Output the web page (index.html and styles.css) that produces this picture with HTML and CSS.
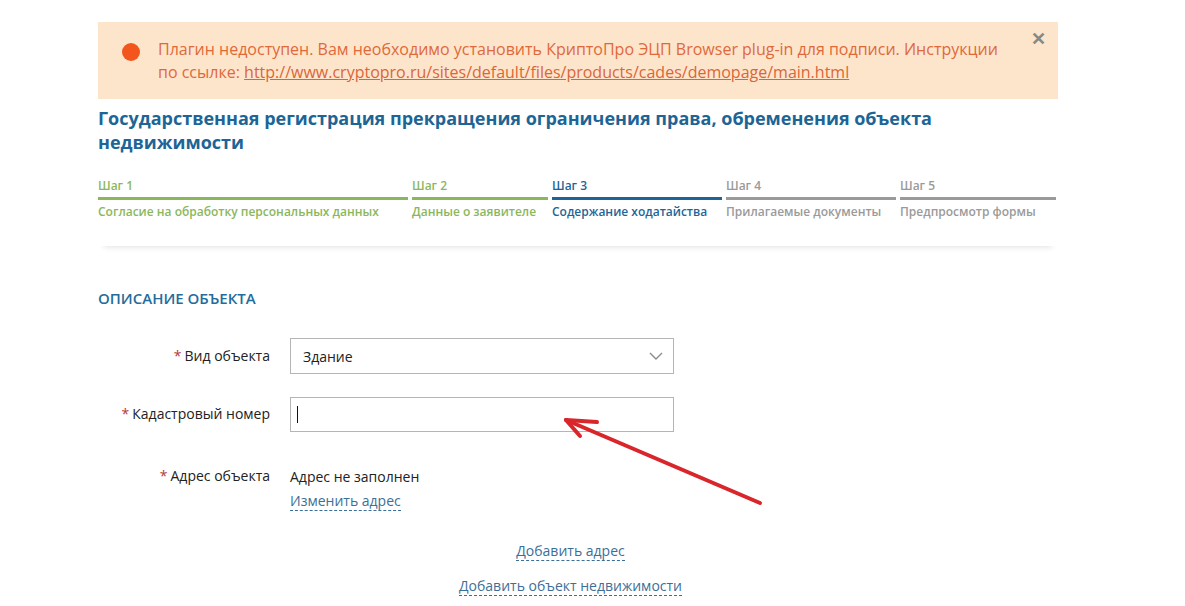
FILE: index.html
```html
<!DOCTYPE html>
<html lang="ru">
<head>
    <meta charset="UTF-8">
    <title>Государственная регистрация</title>
    <link rel="stylesheet" href="styles.css">
</head>
<body>
    <div class="pagina">
        <div class="aviso">
            <span class="aviso-punto"></span>
            <p class="aviso-texto">Плагин недоступен. Вам необходимо установить КриптоПро ЭЦП Browser plug-in для подписи. Инструкции по ссылке: <a href="#">http://www.cryptopro.ru/sites/default/files/products/cades/demopage/main.html</a></p>
            <span class="aviso-cerrar">&#10005;</span>
        </div>

        <div class="cabecera">
            <h1 class="titulo">Государственная регистрация прекращения ограничения права, обременения объекта недвижимости</h1>
            <div class="pasos">
                <div class="paso hecho"><span class="paso-num">Шаг 1</span><span class="paso-nombre">Согласие на обработку персональных данных</span></div>
                <div class="paso hecho"><span class="paso-num">Шаг 2</span><span class="paso-nombre">Данные о заявителе</span></div>
                <div class="paso activo"><span class="paso-num">Шаг 3</span><span class="paso-nombre">Содержание ходатайства</span></div>
                <div class="paso"><span class="paso-num">Шаг 4</span><span class="paso-nombre">Прилагаемые документы</span></div>
                <div class="paso"><span class="paso-num">Шаг 5</span><span class="paso-nombre">Предпросмотр формы</span></div>
            </div>
        </div>

        <h2 class="seccion">Описание объекта</h2>

        <div class="formulario">
            <div class="fila">
                <label class="etiqueta"><span class="req">*</span>Вид объекта</label>
                <div class="campo select">
                    <span>Здание</span>
                    <svg width="14" height="8" viewBox="0 0 14 8"><path d="M1 1l6 6 6-6" fill="none" stroke="#8a8a8a" stroke-width="1.4"/></svg>
                </div>
            </div>
            <div class="fila">
                <label class="etiqueta"><span class="req">*</span>Кадастровый номер</label>
                <div class="campo"><span class="cursor"></span></div>
            </div>
            <div class="fila texto">
                <label class="etiqueta"><span class="req">*</span>Адрес объекта</label>
                <div class="valor">
                    <div>Адрес не заполнен</div>
                    <a href="#" class="enlace">Изменить адрес</a>
                </div>
            </div>
            <div class="acciones">
                <a href="#" class="enlace">Добавить адрес</a>
                <a href="#" class="enlace">Добавить объект недвижимости</a>
            </div>
        </div>
    </div>

    <svg class="flecha" width="1185" height="606" viewBox="0 0 1185 606">
        <g fill="none" stroke="#d9262b" stroke-width="4" stroke-linecap="round" stroke-linejoin="round">
            <path d="M760 503 L566 420"/>
            <path d="M566 420 L597 422"/>
            <path d="M566 420 L580 436"/>
        </g>
    </svg>
</body>
</html>
```

FILE: styles.css
```css
* {
    margin: 0;
    padding: 0;
    box-sizing: border-box;
}
body {
    font-family: 'Open Sans', sans-serif;
    background-color: #fff;
    color: #222;
    position: relative;
    overflow: hidden;
}
.pagina {
    width: 960px;
    margin-left: 98px;
    padding-top: 22px;
}
.aviso {
    display: flex;
    align-items: flex-start;
    background-color: #fde5cc;
    height: 77px;
    padding: 16px 12px 0 24px;
}
.aviso-punto {
    flex: 0 0 18px;
    width: 18px;
    height: 18px;
    border-radius: 50%;
    background-color: #f2561d;
    margin: 5px 18px 0 0;
}
.aviso-texto {
    flex: 1;
    font-size: 16px;
    line-height: 23px;
    color: #e0693a;
}
.aviso-texto a {
    color: #d9663a;
}
.aviso-cerrar {
    font-size: 18px;
    color: #888;
    line-height: 1;
    margin: -9px 0 0 20px;
    font-weight: bold;
}
.cabecera {
    padding-top: 7px;
    padding-bottom: 26px;
    box-shadow: 0 7px 6px -6px rgba(0, 0, 0, 0.12);
}
.titulo {
    font-size: 18px;
    line-height: 24px;
    font-weight: 700;
    color: #1c6596;
    width: 860px;
}
.pasos {
    display: grid;
    grid-template-columns: 310px 136px 170px 170px 156px;
    gap: 4px;
    margin-top: 24px;
}
.paso {
    display: flex;
    flex-direction: column;
    font-size: 12px;
    font-weight: 600;
    color: #9a9a9a;
}
.paso-num {
    line-height: 16px;
    padding-bottom: 3px;
    border-bottom: 3px solid #9a9a9a;
}
.paso-nombre {
    line-height: 16px;
    padding-top: 4px;
}
.paso.hecho {
    color: #8bb75c;
}
.paso.hecho .paso-num {
    border-color: #8bb75c;
}
.paso.activo {
    color: #1d6596;
}
.paso.activo .paso-num {
    border-color: #1d6596;
}
.seccion {
    margin-top: 42px;
    font-size: 15px;
    font-weight: 600;
    text-transform: uppercase;
    color: #236c9c;
    line-height: 20px;
}
.formulario {
    margin-top: 30px;
}
.fila {
    display: flex;
    align-items: center;
    gap: 20px;
    margin-bottom: 23px;
}
.fila.texto {
    align-items: flex-start;
    margin-top: 34px;
}
.etiqueta {
    flex: 0 0 172px;
    text-align: right;
    font-size: 14px;
    color: #222;
    margin-top: -2px;
}
.fila.texto .etiqueta {
    margin-top: 0;
}
.req {
    color: #b33a3a;
    margin-right: 3px;
}
.campo {
    width: 384px;
    height: 35px;
    border: 1px solid #b5b5b5;
    display: flex;
    align-items: center;
    justify-content: space-between;
    padding: 0 10px 0 12px;
    font-size: 14px;
}
.campo.select {
    height: 36px;
}
.cursor {
    width: 1px;
    height: 17px;
    background-color: #111;
    margin-left: -6px;
}
.valor {
    font-size: 14px;
    line-height: 24px;
    margin-top: -1px;
}
.enlace {
    color: #3c6f98;
    text-decoration: none;
    border-bottom: 1px dashed #3c6f98;
    font-size: 14px;
    line-height: 18px;
}
.acciones {
    width: 945px;
    display: flex;
    flex-direction: column;
    align-items: center;
    gap: 16px;
    margin-top: 29px;
}
.flecha {
    position: absolute;
    top: 0;
    left: 0;
    pointer-events: none;
}
```
